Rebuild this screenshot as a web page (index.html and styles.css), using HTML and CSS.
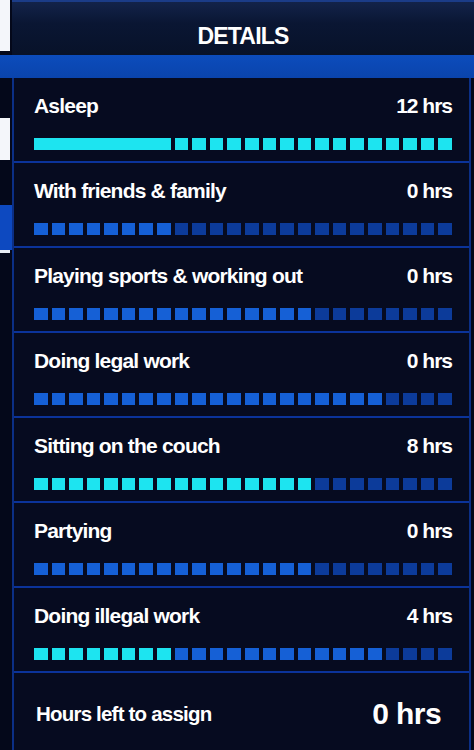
FILE: index.html
```html
<!DOCTYPE html>
<html lang="en">
<head>
    <meta charset="UTF-8">
    <meta name="viewport" content="width=device-width, initial-scale=1.0">
    <link rel="stylesheet" href="styles.css">
    <title>Details</title>
</head>
<body>
    <div class="screen">
        <div class="top">
            <div class="tab"></div>
            <div class="header"><h1>DETAILS</h1></div>
        </div>
        <div class="band"></div>

        <div class="main">
            <div class="side">
                <div class="side-white"></div>
                <div class="side-blue"></div>
                <div class="side-line"></div>
            </div>

            <div class="list" id="list"></div>
        </div>
    </div>

    <script>
        // each bar: [kind, count] segments, 24 blocks total
        const rows = [
            { label: 'Asleep', value: '12 hrs', bar: [['solid', 8], ['cyan', 16]] },
            { label: 'With friends & family', value: '0 hrs', bar: [['on', 8], ['off', 16]] },
            { label: 'Playing sports & working out', value: '0 hrs', bar: [['on', 16], ['off', 8]] },
            { label: 'Doing legal work', value: '0 hrs', bar: [['on', 20], ['off', 4]] },
            { label: 'Sitting on the couch', value: '8 hrs', bar: [['cyan', 16], ['off', 8]] },
            { label: 'Partying', value: '0 hrs', bar: [['on', 16], ['off', 8]] },
            { label: 'Doing illegal work', value: '4 hrs', bar: [['cyan', 8], ['on', 12], ['off', 4]] }
        ];

        const list = document.getElementById('list');

        rows.forEach((row) => {
            const el = document.createElement('div');
            el.className = 'row';

            const head = document.createElement('div');
            head.className = 'row-head';
            head.innerHTML = `<span class="label"></span><span class="value"></span>`;
            head.querySelector('.label').textContent = row.label;
            head.querySelector('.value').textContent = row.value;

            const bar = document.createElement('div');
            bar.className = 'bar';
            row.bar.forEach(([kind, count]) => {
                if (kind === 'solid') {
                    const b = document.createElement('span');
                    b.className = 'block cyan solid';
                    b.style.gridColumn = `span ${count}`;
                    bar.appendChild(b);
                    return;
                }
                for (let i = 0; i < count; i++) {
                    const b = document.createElement('span');
                    b.className = `block ${kind}`;
                    bar.appendChild(b);
                }
            });

            el.appendChild(head);
            el.appendChild(bar);
            list.appendChild(el);
        });

        const total = document.createElement('div');
        total.className = 'row total';
        total.innerHTML = '<span class="label">Hours left to assign</span><span class="big">0 hrs</span>';
        list.appendChild(total);
    </script>
</body>
</html>
```

FILE: styles.css
```css
body {
    margin: 0;
    background-color: #04081a;
    font-family: 'Liberation Sans', Arial, sans-serif;
    color: white;
}

.screen {
    width: 474px;
    height: 750px;
    overflow: hidden;
    display: flex;
    flex-direction: column;
}

.top {
    display: flex;
    height: 55px;
}

.tab {
    width: 10px;
    height: 51px;
    background-color: #f4f6fa;
}

.header {
    flex: 1;
    margin-left: 2px;
    display: flex;
    align-items: center;
    justify-content: center;
    background: linear-gradient(#13234a, #0a1633 40%, #081229);
    border-top: 2px solid #1b3c88;
}

.header h1 {
    margin: 15px 0 0;
    font-size: 23px;
    font-weight: bold;
    letter-spacing: -0.8px;
}

.band {
    height: 23px;
    background: linear-gradient(#0c4cbc, #0a44ac);
}

.main {
    flex: 1;
    display: flex;
}

.side {
    width: 12px;
    display: flex;
    flex-direction: column;
}

.side-white {
    width: 10px;
    height: 42px;
    margin-top: 40px;
    background-color: #f4f6fa;
}

.side-blue {
    height: 45px;
    margin-top: 45px;
    background-color: #0d49c0;
}

.side-line {
    width: 10px;
    height: 3px;
    background-color: #e8ecf4;
}

.list {
    width: 455px;
    border-left: 2px solid #0b2f86;
    border-right: 2px solid #0b2f86;
    display: flex;
    flex-direction: column;
}

.row {
    height: 85px;
    box-sizing: border-box;
    padding: 16px 17px 0 20px;
    border-bottom: 2px solid #0b339a;
    background-color: #060b20;
}

.row-head {
    display: flex;
    justify-content: space-between;
    align-items: baseline;
    height: 24px;
}

.label {
    font-size: 21px;
    font-weight: bold;
    letter-spacing: -0.8px;
}

.value {
    font-size: 21px;
    font-weight: bold;
    letter-spacing: -1px;
}

.bar {
    margin-top: 20px;
    display: grid;
    grid-template-columns: repeat(24, 1fr);
    gap: 4px;
    height: 12px;
}

.block.cyan {
    background-color: #1de4f0;
}

.block.on {
    background-color: #1560d6;
}

.block.off {
    background-color: #0c3b9a;
}

.total {
    flex: 1;
    display: flex;
    justify-content: space-between;
    align-items: center;
    padding: 4px 28px 0 22px;
    border-bottom: none;
}

.total .label {
    font-size: 20.5px;
    letter-spacing: -0.8px;
}

.total .big {
    font-size: 30px;
    font-weight: bold;
    letter-spacing: -0.6px;
}
```
